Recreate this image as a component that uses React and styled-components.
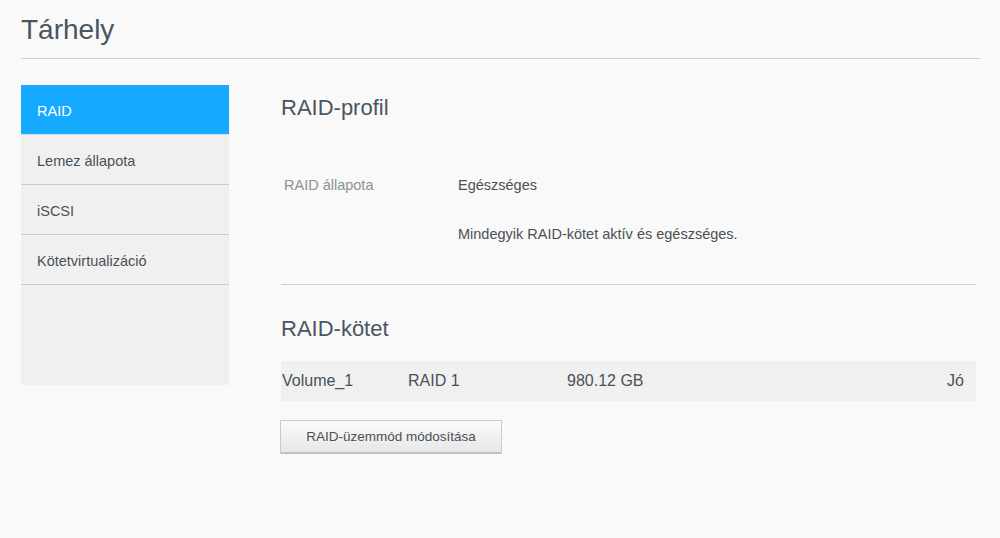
import React from "react";
import styled, { createGlobalStyle } from "styled-components";

const Global = createGlobalStyle`
  html, body { margin: 0; padding: 0; background: #f9f9f9; }
  body { font-family: "Liberation Sans", Arial, sans-serif; color: #4a5057; }
  * { box-sizing: border-box; }
`;

const Page = styled.div`
  width: 1000px;
  height: 538px;
  padding: 0 20px 0 21px;
  background: #f9f9f9;
`;

const Header = styled.header`
  height: 59px;
  border-bottom: 1px solid #cfcfcf;
  display: flex;
  align-items: center;
  padding-top: 2px;
`;

const Title = styled.h1`
  margin: 0;
  font-size: 28px;
  font-weight: normal;
  line-height: 32px;
  color: #4b5561;
`;

const Body = styled.div`
  display: flex;
  gap: 52px;
  margin-top: 26px;
  padding-right: 4px;
`;

const Sidebar = styled.nav`
  width: 208px;
  height: 300px;
  background: #f0f0f0;
  display: flex;
  flex-direction: column;
  flex-shrink: 0;
`;

const NavItem = styled.div`
  height: 50px;
  border-bottom: 1px solid ${(p) => (p.$active ? "#dcdcdc" : "#cbcbcb")};
  background: ${(p) => (p.$active ? "#15aaff" : "transparent")};
  color: ${(p) => (p.$active ? "#ffffff" : "#4a5057")};
  display: flex;
  align-items: center;
  padding: 2px 0 0 16px;
  font-size: 14.5px;
`;

const Content = styled.main`
  flex: 1;
  display: flex;
  flex-direction: column;
  padding-top: 8px;
`;

const SectionTitle = styled.h2`
  margin: 0;
  font-size: 22px;
  font-weight: normal;
  line-height: 30px;
  color: #4b5561;
`;

const InfoGrid = styled.div`
  display: grid;
  grid-template-columns: 177px 1fr;
  row-gap: 29px;
  margin-top: 52px;
  font-size: 14.5px;
  line-height: 20px;
`;

const Label = styled.div`
  color: #8c9196;
  padding-left: 3px;
`;

const Value = styled.div`
  color: #4a5057;
  grid-column: ${(p) => (p.$full ? "2" : "auto")};
`;

const Divider = styled.hr`
  border: none;
  border-top: 1px solid #cfcfcf;
  margin: 40px 0 0 0;
  width: 100%;
`;

const SecondTitle = styled(SectionTitle)`
  margin-top: 29px;
`;

const VolumeRow = styled.div`
  margin-top: 17px;
  height: 40px;
  background: #f0f0f0;
  display: grid;
  grid-template-columns: 126px 159px 1fr auto;
  align-items: center;
  padding: 0 12px 0 1px;
  font-size: 16px;
  color: #4a5057;
`;

const Cell = styled.div`
  text-align: ${(p) => (p.$right ? "right" : "left")};
`;

const Actions = styled.div`
  margin-top: 19px;
  margin-left: -1px;
`;

const Button = styled.button`
  width: 222px;
  height: 34px;
  font-family: "Liberation Sans", Arial, sans-serif;
  font-size: 13.5px;
  color: #4a5057;
  background: linear-gradient(#fbfbfb, #e7e7e7);
  border: 1px solid #cacaca;
  border-bottom: 2px solid #c2c2c2;
  border-radius: 1px;
  padding: 0;
  cursor: pointer;
`;

const navItems = ["RAID", "Lemez állapota", "iSCSI", "Kötetvirtualizáció"];

export default function App() {
  return (
    <>
      <Global />
      <Page>
        <Header>
          <Title>Tárhely</Title>
        </Header>
        <Body>
          <Sidebar>
            {navItems.map((n, i) => (
              <NavItem key={n} $active={i === 0}>
                {n}
              </NavItem>
            ))}
          </Sidebar>
          <Content>
            <SectionTitle>RAID-profil</SectionTitle>
            <InfoGrid>
              <Label>RAID állapota</Label>
              <Value>Egészséges</Value>
              <Value $full>Mindegyik RAID-kötet aktív és egészséges.</Value>
            </InfoGrid>
            <Divider />
            <SecondTitle>RAID-kötet</SecondTitle>
            <VolumeRow>
              <Cell>Volume_1</Cell>
              <Cell>RAID 1</Cell>
              <Cell>980.12 GB</Cell>
              <Cell $right>Jó</Cell>
            </VolumeRow>
            <Actions>
              <Button>RAID-üzemmód módosítása</Button>
            </Actions>
          </Content>
        </Body>
      </Page>
    </>
  );
}
